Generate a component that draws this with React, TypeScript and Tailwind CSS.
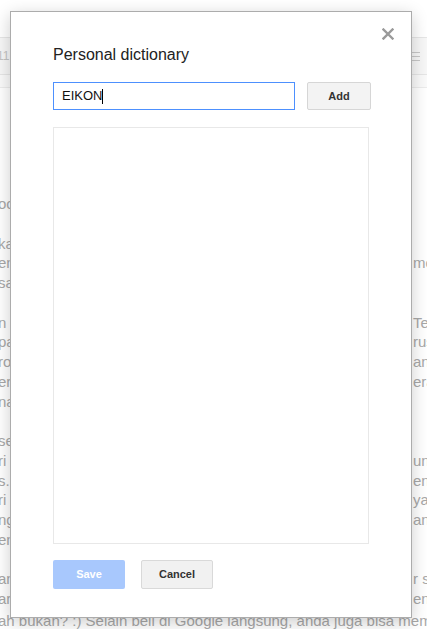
import * as React from 'react';

const lines: [string, string][] = [
  ['ood', ''],
  ['', ''],
  ['kan', ''],
  ['ene', 'me'],
  ['sa', ''],
  ['', ''],
  ['n s', 'Tek'],
  ['pai', 'rus'],
  ['ro', 'ang'],
  ['er', 'era'],
  ['na', ''],
  ['', ''],
  ['se', ''],
  ['ri', 'unt'],
  ['s.', 'eng'],
  ['ri', 'yan'],
  ['ng', 'an'],
  ['en', ''],
  ['', ''],
  ['an', 'r s'],
  ['ar', 'ene'],
];

function CloseIcon() {
  return (
    <svg width="12" height="12" viewBox="0 0 12 12" className="block">
      <path d="M1.5 1.5L10.5 10.5M10.5 1.5L1.5 10.5" stroke="#9a9a9a" strokeWidth="2.4" strokeLinecap="square" />
    </svg>
  );
}

export default function App() {
  return (
    <div
      className="relative w-[427px] h-[629px] overflow-hidden bg-white"
      style={{ fontFamily: '"Liberation Sans", Arial, sans-serif' }}
    >
      {/* faded document behind the dialog */}
      <div className="text-[#a8a8a8]">
        <div className="h-[38px] border-b border-[#e6e6e6]" />
        <div className="h-[37px] flex items-center justify-between border-b border-[#e6e6e6] bg-[#f7f7f7] pl-0 pr-[7px]">
          <span className="text-[12px] text-[#c4c4c4] -ml-[3px]">11</span>
          <div className="flex flex-col gap-[3px]">
            <span className="block w-[8px] h-px bg-[#c8c8c8]" />
            <span className="block w-[8px] h-px bg-[#c8c8c8]" />
            <span className="block w-[8px] h-px bg-[#c8c8c8]" />
          </div>
        </div>
        <div className="h-[13px] border-b border-[#ececec] bg-[#fafafa]" />
        <div className="pt-[106px] text-[15px] leading-[19.75px]">
          {lines.map(([l, r], i) => (
            <div key={i} className="flex h-[19.75px] whitespace-nowrap">
              <div className="w-[413px] shrink-0 overflow-hidden -ml-[2px]">{l}</div>
              <div className="pl-[2px]">{r}</div>
            </div>
          ))}
          <div className="whitespace-nowrap -ml-[2px] mt-[2px]">
            ah bukan? :) Selain beli di Google langsung, anda juga bisa membeli
          </div>
        </div>
      </div>

      {/* dialog */}
      <div className="absolute left-[10px] top-[11px] w-[402px] h-[607px] bg-white border border-[#acacac] shadow-[0_4px_16px_rgba(0,0,0,0.2)] pt-[31px] px-[42px]">
        <button className="absolute right-[17px] top-[16px] p-0">
          <CloseIcon />
        </button>
        <h2 className="text-[16px] leading-[24px] text-[#222]">Personal dictionary</h2>
        <div className="mt-[15px] flex gap-[12px]">
          <div className="w-[242px] shrink-0 h-[28px] border border-[#4d90fe] flex items-center pl-[8px] text-[13px] text-[#111]">
            EIKON
            <span className="inline-block w-px h-[15px] bg-black" />
          </div>
          <button className="w-[64px] shrink-0 h-[28px] rounded-[2px] border border-[#d6d6d6] bg-[#f3f3f3] text-[11px] font-bold text-[#333]">
            Add
          </button>
        </div>
        <div className="mt-[17px] w-[316px] h-[417px] border border-[#e8e8e8]" />
        <div className="mt-[16px] flex gap-[16px]">
          <button className="w-[72px] h-[29px] rounded-[2px] bg-[#a8c8fd] text-[11px] font-bold text-white">
            Save
          </button>
          <button className="w-[72px] h-[29px] rounded-[2px] border border-[#d9d9d9] bg-[#f1f1f1] text-[11px] font-bold text-[#333]">
            Cancel
          </button>
        </div>
      </div>
    </div>
  );
}
